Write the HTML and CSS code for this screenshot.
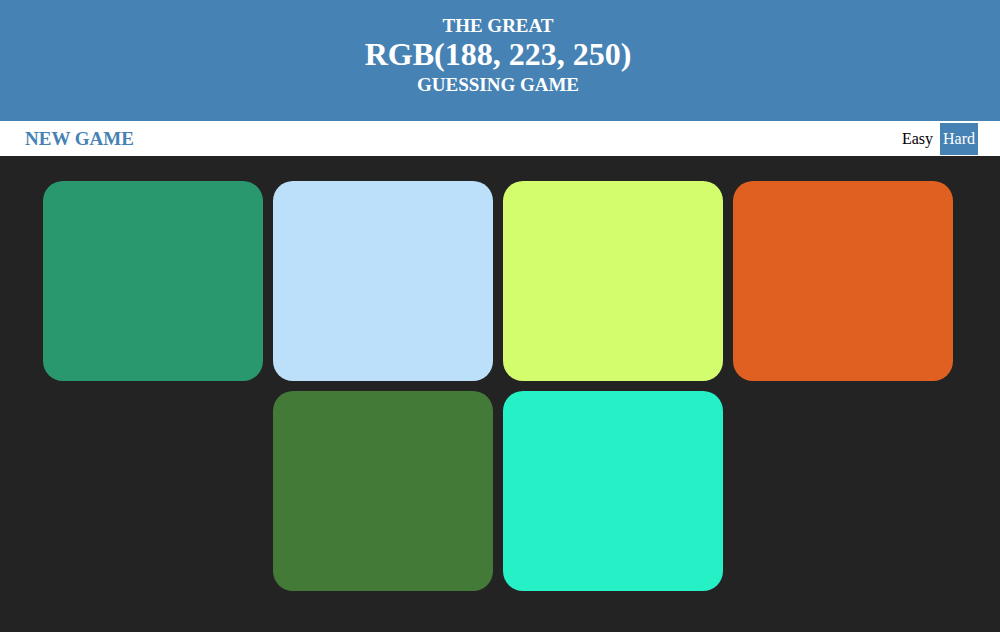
FILE: index.html
```html
<!DOCTYPE html>
<html>
<head>
<meta charset="utf-8">
<title>Colour Game</title>
<link rel="stylesheet" href="styles.css">
</head>
<body>
<h1 class="title">
  <span class="line-small">THE GREAT</span>
  <span class="line-big">RGB(188, 223, 250)</span>
  <span class="line-bottom">GUESSING GAME</span>
</h1>
<div class="stripe">
  <button class="reset">NEW GAME</button>
  <div class="modes">
    <button class="mode">Easy</button>
    <button class="mode selected">Hard</button>
  </div>
</div>
<div class="container">
  <div class="square c1"></div>
  <div class="square c2"></div>
  <div class="square c3"></div>
  <div class="square c4"></div>
  <div class="square c5"></div>
  <div class="square c6"></div>
</div>
</body>
</html>
```
FILE: styles.css
```css
html, body {
  margin: 0;
  padding: 0;
}
body {
  background: #232323;
  font-family: "Liberation Serif", "Times New Roman", serif;
  height: 632px;
  overflow: hidden;
}
.title {
  margin: 0;
  box-sizing: border-box;
  height: 121px;
  padding: 16px 4px 0 0;
  background: steelblue;
  color: #fff;
  text-align: center;
  font-weight: bold;
}
.title span {
  display: block;
}
.line-small {
  font-size: 19px;
  line-height: 20px;
}
.line-big {
  font-size: 32px;
  line-height: 36px;
}
.line-bottom {
  font-size: 19px;
  line-height: 26px;
}
.stripe {
  background: #fff;
  height: 35px;
  display: flex;
  align-items: center;
  justify-content: space-between;
  padding: 0 22px 0 25px;
}
button {
  font-family: inherit;
  border: none;
  background: none;
  margin: 0;
  outline: none;
}
.reset {
  padding: 0;
  color: steelblue;
  font-weight: bold;
  font-size: 19px;
}
.modes {
  display: flex;
  align-items: center;
  gap: 4px;
}
.mode {
  font-size: 16px;
  color: #000;
  padding: 0 3px;
  height: 32px;
  line-height: 32px;
}
.mode.selected {
  background: steelblue;
  color: #fff;
}
.container {
  width: 910px;
  margin: 25px 0 0 43px;
  display: flex;
  flex-wrap: wrap;
  justify-content: center;
  gap: 10px;
}
.square {
  width: 220px;
  height: 200px;
  border-radius: 20px;
}
.c1 { background: rgb(42, 152, 110); }
.c2 { background: rgb(188, 223, 250); }
.c3 { background: rgb(212, 253, 110); }
.c4 { background: rgb(224, 96, 34); }
.c5 { background: rgb(68, 122, 56); }
.c6 { background: rgb(38, 240, 198); }
```
